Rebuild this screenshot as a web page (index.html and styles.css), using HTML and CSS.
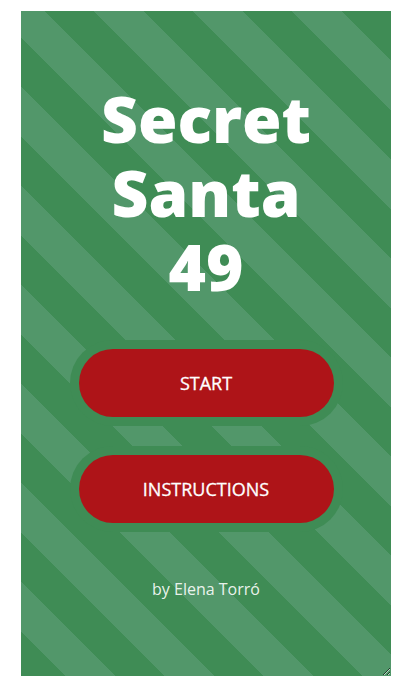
FILE: index.html
```html
<!DOCTYPE html>
<html lang="en">
<head>
<meta charset="utf-8">
<title>Secret Santa 49</title>
<link rel="stylesheet" href="styles.css">
</head>
<body>
<main class="card">
  <h1 class="title">
    <span class="title-line">Secret</span>
    <span class="title-line">Santa</span>
    <span class="title-line">49</span>
  </h1>
  <div class="actions">
    <button class="btn" type="button">START</button>
    <button class="btn" type="button">INSTRUCTIONS</button>
  </div>
  <p class="byline">by Elena Torró</p>
</main>
</body>
</html>
```

FILE: styles.css
```css
html, body {
  margin: 0;
  padding: 0;
  background: #ffffff;
}

body {
  padding: 11px 14px 11px 21px;
  font-family: "Open Sans", "Liberation Sans", sans-serif;
}

.card {
  box-sizing: border-box;
  width: 370px;
  height: 665px;
  padding-top: 71px;
  display: flex;
  flex-direction: column;
  align-items: center;
  background-color: #3f8c55;
  background-image: linear-gradient(45deg,
      #52976a 25%, #3f8c55 25%, #3f8c55 50%,
      #52976a 50%, #52976a 75%, #3f8c55 75%);
  background-size: 99px 99px;
  background-position: -26px 0;
  resize: both;
  overflow: auto;
}

.title {
  margin: 0;
  display: flex;
  flex-direction: column;
  align-items: center;
  color: #ffffff;
  font-weight: 800;
  font-size: 64px;
  line-height: 74px;
  text-align: center;
}

.title-line {
  display: block;
  height: 74px;
}

.actions {
  margin-top: 45px;
  display: flex;
  flex-direction: column;
  gap: 38px;
}

.btn {
  width: 255px;
  height: 68px;
  border: none;
  border-radius: 34px;
  background: #ae1418;
  color: #ffffff;
  font-family: "Open Sans", "Liberation Sans", sans-serif;
  font-size: 18px;
  font-weight: 400;
  -webkit-text-stroke: 0.3px #ffffff;
  box-shadow: 0 0 0 9px #3f8c55;
  cursor: pointer;
}

.byline {
  margin: 55px 0 0;
  color: rgba(255, 255, 255, 0.9);
  font-size: 16px;
  line-height: 22px;
}
```
